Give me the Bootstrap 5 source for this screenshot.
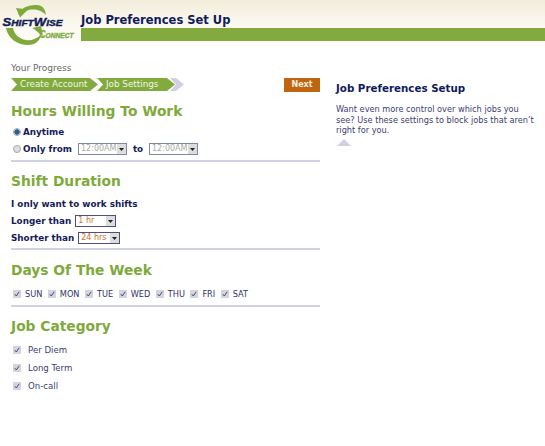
<!DOCTYPE html>
<html lang="en">
<head>
    <meta charset="UTF-8">
    <meta name="viewport" content="width=device-width, initial-scale=1.0">
    <title>Job Preferences Set Up</title>
    <link href="https://cdn.jsdelivr.net/npm/bootstrap@5.3.0/dist/css/bootstrap.min.css" rel="stylesheet">
    <style>
        body { font-family: "DejaVu Sans", Verdana, sans-serif; font-size: 9px; color: #3c4070; background: #fff; overflow: hidden; }
        .top-strip { height: 50px; background: linear-gradient(#f2eddb, #fbf9f1 27px, #fff 50px); position: relative; }
        .logo-box { position: absolute; left: 0; top: 0; width: 80px; height: 50px; }
        .title-area { margin-left: 81px; padding-top: 12px; }
        .page-title { font-size: 11.5px; font-weight: 700; line-height: 16px; color: #101a5c; margin: 0; }
        .green-bar { height: 13px; background: #82aa3e; }
        .page-body { padding: 12px 0 0 11px; width: 545px; }
        .left-col { width: 309px; }
        .right-col { width: 200px; margin-left: 16px; padding-top: 19px; }
        .prog-label { font-size: 9px; line-height: 12px; color: #666; }
        .prog-row { height: 14px; margin-top: 4px; }
        .step { height: 13px; color: #f2f6e6; font-size: 8.8px; line-height: 13px; background: #82aa3e; padding-left: 9px; clip-path: polygon(0 0, calc(100% - 8px) 0, 100% 50%, calc(100% - 8px) 100%, 0 100%, 6px 50%); }
        .step-one { width: 87px; }
        .step-two { width: 78px; margin-left: -1px; }
        .step-tail { width: 14px; height: 13px; margin-left: -5px; background: #cfd0e0; clip-path: polygon(0 0, 6px 0, 100% 50%, 6px 100%, 0 100%, 6px 50%); position: relative; z-index: -1; }
        .next-btn { width: 36px; height: 14px; padding: 0; border: 0; border-radius: 0; background: #bf650f; color: #f8eee0; font-size: 8px; font-weight: 700; line-height: 14px; }
        .next-btn:hover { background: #bf650f; color: #f8eee0; }
        .sect-head { font-size: 13.8px; font-weight: 700; line-height: 18px; color: #7eaa3c; margin: 0; }
        .head-one { margin-top: 10px; }
        .strong-line { font-size: 8.8px; font-weight: 700; color: #141c58; line-height: 12px; }
        .sect-rule { height: 2px; background: #d0d1e2; margin: 0; border: 0; opacity: 1; }
        .radio-box { appearance: none; width: 8px; height: 8px; border-radius: 50%; margin: 0 1px 0 2px; border: 1px solid #aaa; background: #ddd; flex: none; }
        .radio-box:checked { background: radial-gradient(circle, #2d5f8f 0 2.4px, #dde 3px); border-color: #9ab; }
        .chk-box { appearance: none; width: 8px; height: 8px; flex: none; margin: 0 0 0 2px; background: #d3d4dd url("data:image/svg+xml,%3Csvg xmlns='http://www.w3.org/2000/svg' viewBox='0 0 8 8'%3E%3Cpath d='M1.8 4.2 3.3 6 6.2 1.8' fill='none' stroke='%233c4a80' stroke-width='1'/%3E%3C/svg%3E") center no-repeat; border: 0; }
        .time-sel, .len-sel { appearance: none; height: 12px; padding: 0 0 0 2px; font-family: "DejaVu Sans", Verdana, sans-serif; font-size: 8px; font-weight: 400; line-height: 10px; border: 1px solid #4a5080; border-radius: 0; background: #fff url("data:image/svg+xml,%3Csvg xmlns='http://www.w3.org/2000/svg' width='9' height='10'%3E%3Crect width='9' height='10' fill='%23ddd'/%3E%3Cpath d='M2 4h5L4.500 7z' fill='%23222'/%3E%3C/svg%3E") right center no-repeat; }
        .time-sel { width: 49px; color: #aaa; border-color: #8088a8; }
        .len-sel { color: #c8742a; }
        .len-one { width: 41px; }
        .len-two { width: 42px; }
        .only-label { width: 67px; flex: none; }
        .to-label { width: 22px; text-align: center; flex: none; }
        .anytime-row { margin-top: 6px; gap: 1px; }
        .hours-row { margin-top: 4px; height: 14px; }
        .only-label { gap: 1px; }
        .rule-one { margin-top: 4px; }
        .head-two { margin-top: 10px; }
        .line-a { margin-top: 8px; }
        .line-b { margin-top: 4px; height: 14px; gap: 4px; }
        .line-c { margin-top: 3px; height: 14px; gap: 4px; }
        .rule-two { margin-top: 3px; }
        .head-three { margin-top: 11px; }
        .day-list { margin-top: 9px; height: 12px; }
        .day-item { font-size: 8.2px; color: #2e3468; line-height: 12px; margin: 0 3.500px 0 4px; }
        .rule-three { margin-top: 5px; }
        .head-four { margin-top: 10px; }
        .cat-list { margin-top: 6px; }
        .cat-row { height: 18px; font-size: 8.6px; color: #3c4070; }
        .cat-row span { margin-left: 7px; }
        .side-head { font-size: 10.3px; font-weight: 700; line-height: 14px; color: #101a5c; margin: 0 0 9px; }
        .side-text { font-size: 8.2px; line-height: 10.6px; color: #3c4070; margin: 0; }
        .side-tri { width: 0; height: 0; margin: 3px 0 0 1px; border-left: 7px solid transparent; border-right: 7px solid transparent; border-bottom: 7px solid #cfd0e0; }
    </style>
</head>
<body>

<!-- Header -->
<div class="top-strip">
    <svg class="logo-box" viewBox="0 0 80 50" aria-label="ShiftWise Connect">
        <path d="M18 14C22 7 30 4.500 37 5C42 5.500 45 8 46 15C42 11 38 9.500 33 9.500C28 9.500 25 11 22 15z" fill="#7eaa3c"/>
        <path d="M16 8l12 1.500-8 8z" fill="#7eaa3c"/>
        <path d="M6 28C8 39 18 45 28 45C35 45 40 41 41 35C36 39 31 41 26 40C19 39 14 34 13 28z" fill="#7eaa3c"/>
        <path d="M32 28l9-2 2 10-3-2-6-5z" fill="#7eaa3c"/>
        <text x="2.500" y="26" font-family="Liberation Sans" font-weight="700" font-style="italic" font-size="11" fill="#141c58" stroke="#141c58" stroke-width=".4" textLength="60" lengthAdjust="spacingAndGlyphs">S<tspan font-size="8.500">HIFT</tspan>W<tspan font-size="8.500">ISE</tspan></text>
        <text x="39.500" y="37.500" font-family="Liberation Sans" font-weight="700" font-style="italic" font-size="10" fill="#7eaa3c" stroke="#7eaa3c" stroke-width=".4" textLength="34" lengthAdjust="spacingAndGlyphs">C<tspan font-size="8">ONNECT</tspan></text>
    </svg>
    <div class="title-area">
        <h1 class="page-title">Job Preferences Set Up</h1>
        <div class="green-bar"></div>
    </div>
</div>

<div class="page-body d-flex">
    <!-- Left column -->
    <div class="left-col">
        <div class="prog-label">Your Progress</div>
        <div class="prog-row d-flex align-items-start">
            <div class="step step-one">Create Account</div>
            <div class="step step-two">Job Settings</div>
            <div class="step-tail"></div>
            <button class="btn next-btn ms-auto" type="button">Next</button>
        </div>

        <h2 class="sect-head head-one">Hours Willing To Work</h2>
        <div class="strong-line d-flex align-items-center anytime-row">
            <input class="radio-box" type="radio" name="hours" checked>Anytime
        </div>
        <div class="strong-line d-flex align-items-center hours-row">
            <span class="only-label d-flex align-items-center"><input class="radio-box" type="radio" name="hours">Only from</span>
            <select class="time-sel" disabled><option>12:00AM</option></select>
            <span class="to-label">to</span>
            <select class="time-sel" disabled><option>12:00AM</option></select>
        </div>
        <hr class="sect-rule rule-one">

        <h2 class="sect-head head-two">Shift Duration</h2>
        <div class="strong-line line-a">I only want to work shifts</div>
        <div class="strong-line d-flex align-items-center line-b">Longer than <select class="len-sel len-one"><option>1 hr</option></select></div>
        <div class="strong-line d-flex align-items-center line-c">Shorter than <select class="len-sel len-two"><option>24 hrs</option></select></div>
        <hr class="sect-rule rule-two">

        <h2 class="sect-head head-three">Days Of The Week</h2>
        <div class="d-flex align-items-center day-list">
            <input class="chk-box" type="checkbox" checked><span class="day-item">SUN</span>
            <input class="chk-box" type="checkbox" checked><span class="day-item">MON</span>
            <input class="chk-box" type="checkbox" checked><span class="day-item">TUE</span>
            <input class="chk-box" type="checkbox" checked><span class="day-item">WED</span>
            <input class="chk-box" type="checkbox" checked><span class="day-item">THU</span>
            <input class="chk-box" type="checkbox" checked><span class="day-item">FRI</span>
            <input class="chk-box" type="checkbox" checked><span class="day-item">SAT</span>
        </div>
        <hr class="sect-rule rule-three">

        <h2 class="sect-head head-four">Job Category</h2>
        <div class="cat-list">
            <div class="cat-row d-flex align-items-center"><input class="chk-box" type="checkbox" checked><span>Per Diem</span></div>
            <div class="cat-row d-flex align-items-center"><input class="chk-box" type="checkbox" checked><span>Long Term</span></div>
            <div class="cat-row d-flex align-items-center"><input class="chk-box" type="checkbox" checked><span>On-call</span></div>
        </div>
    </div>

    <!-- Right column -->
    <div class="right-col">
        <h3 class="side-head">Job Preferences Setup</h3>
        <p class="side-text">Want even more control over which jobs you see? Use these settings to block jobs that aren’t right for you.</p>
        <div class="side-tri"></div>
    </div>
</div>

</body>
</html>
